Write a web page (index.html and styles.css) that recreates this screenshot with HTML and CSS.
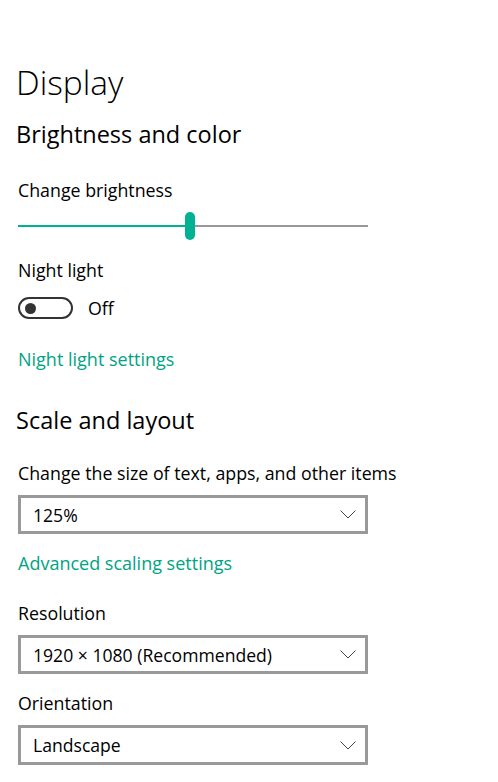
FILE: index.html
```html
<!DOCTYPE html>
<html lang="en">
<head>
<meta charset="utf-8">
<title>Display</title>
<link rel="stylesheet" href="styles.css">
</head>
<body>
<main class="page">
  <h1 class="title">Display</h1>
  <h2 class="section first">Brightness and color</h2>

  <div class="label brightness-label">Change brightness</div>
  <div class="slider">
    <div class="fill"></div>
    <div class="thumb"></div>
    <div class="rest"></div>
  </div>

  <div class="label night-label">Night light</div>
  <div class="toggle-row">
    <span class="toggle"><span class="knob"></span></span>
    <span class="toggle-text">Off</span>
  </div>

  <a class="link night-link" href="#">Night light settings</a>

  <h2 class="section scale">Scale and layout</h2>

  <div class="label size-label">Change the size of text, apps, and other items</div>
  <div class="select">
    <span class="select-text">125%</span>
    <svg class="chev" width="16" height="9" viewBox="0 0 16 9"><path d="M0.5 0.5 L8 8 L15.5 0.5" fill="none" stroke="#444" stroke-width="1"/></svg>
  </div>

  <a class="link adv-link" href="#">Advanced scaling settings</a>

  <div class="label res-label">Resolution</div>
  <div class="select res-select">
    <span class="select-text">1920 × 1080 (Recommended)</span>
    <svg class="chev" width="16" height="9" viewBox="0 0 16 9"><path d="M0.5 0.5 L8 8 L15.5 0.5" fill="none" stroke="#444" stroke-width="1"/></svg>
  </div>

  <div class="label orient-label">Orientation</div>
  <div class="select last-select">
    <span class="select-text">Landscape</span>
    <svg class="chev" width="16" height="9" viewBox="0 0 16 9"><path d="M0.5 0.5 L8 8 L15.5 0.5" fill="none" stroke="#444" stroke-width="1"/></svg>
  </div>
</main>
</body>
</html>
```

FILE: styles.css
```css
html, body {
  margin: 0;
  padding: 0;
  background: #ffffff;
}

body {
  font-family: "Open Sans", "Noto Sans", "Liberation Sans", sans-serif;
  color: #000000;
  width: 498px;
  height: 782px;
  overflow: hidden;
}

.page {
  display: flex;
  flex-direction: column;
  align-items: flex-start;
  padding: 62px 0 0 18px;
}

.title {
  margin: 0 0 0 -2px;
  font-size: 33.5px;
  font-weight: 300;
  line-height: 40px;
}

.section {
  margin: 0 0 0 -2px;
  font-size: 23.5px;
  font-weight: 400;
  line-height: 30px;
}

.section.first {
  margin-top: 17px;
}

.section.scale {
  margin-top: 35px;
}

.label {
  font-size: 17.8px;
  line-height: 22px;
}

.brightness-label { margin-top: 30px; }
.night-label { margin-top: 19px; }
.size-label { margin-top: 27px; }
.res-label { margin-top: 28px; }
.orient-label { margin-top: 18px; }

.slider {
  margin-top: 11px;
  width: 350px;
  height: 28px;
  display: flex;
  align-items: center;
}

.fill {
  width: 167px;
  height: 2px;
  background: #00b294;
}

.thumb {
  width: 10px;
  height: 28px;
  border-radius: 5px;
  background: #00b294;
}

.rest {
  flex: 1;
  height: 2px;
  background: #999999;
}

.toggle-row {
  margin-top: 16px;
  display: flex;
  align-items: center;
  gap: 15px;
}

.toggle {
  box-sizing: border-box;
  width: 55px;
  height: 22px;
  border: 2px solid #333333;
  border-radius: 11px;
  display: flex;
  align-items: center;
  padding-left: 5px;
}

.knob {
  width: 11px;
  height: 11px;
  border-radius: 50%;
  background: #333333;
}

.toggle-text {
  font-size: 17.8px;
  line-height: 22px;
}

.link {
  font-size: 18px;
  line-height: 22px;
  color: #00a383;
  text-decoration: none;
}

.night-link { margin-top: 29px; }
.adv-link { margin-top: 18px; }

.select {
  box-sizing: border-box;
  margin-top: 11px;
  width: 350px;
  height: 39px;
  border: 3px solid #999999;
  display: flex;
  align-items: center;
  justify-content: space-between;
  padding: 0 9px 0 12px;
}

.select.res-select {
  margin-top: 11px;
}

.select.last-select {
  height: 40px;
}

.select-text {
  font-size: 17.6px;
  line-height: 22px;
}

.chev {
  display: block;
}
```
